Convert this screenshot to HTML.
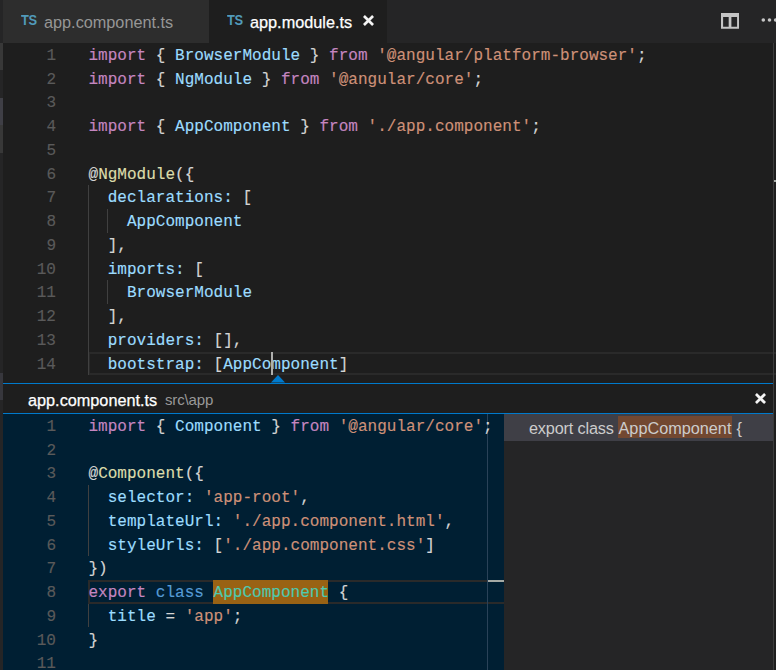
<!DOCTYPE html>
<html>
<head>
<meta charset="utf-8">
<title>app.module.ts</title>
<style>
html,body{margin:0;padding:0;}
body{width:776px;height:670px;overflow:hidden;background:#1e1e1e;position:relative;font-family:"Liberation Sans",sans-serif;}
.abs{position:absolute;}
#side{left:0;top:0;width:3px;height:670px;background:#252526;}
#side i{position:absolute;left:0;width:3px;display:block;}
#tabs{left:3px;top:0;width:773px;height:43px;background:#252526;}
.tab{position:absolute;top:0;height:43px;font-size:16.25px;line-height:44px;white-space:nowrap;}
.tab .ts{position:absolute;top:0;font-size:14px;font-weight:bold;color:#519aba;line-height:41px;letter-spacing:-0.5px;transform:scaleX(0.92);transform-origin:0 0;}
.tab .nm{position:absolute;top:0;}
#t1{left:0;width:206px;background:#2d2d2d;color:#969696;}
#t2{left:206px;width:178px;background:#1e1e1e;color:#fff;}
#t2 .nm{-webkit-text-stroke:0.25px;}
.code{font-family:"Liberation Mono",monospace;font-size:16px;letter-spacing:0.02px;white-space:pre;color:#d4d4d4;-webkit-text-stroke:0.15px;}
.ln{position:absolute;left:0;height:23.75px;line-height:23.75px;width:100%;}
.ln b{position:absolute;left:0;top:2px;width:53px;text-align:right;color:#5a5a5a;font-weight:normal;}
.ln span.c{position:absolute;left:85.5px;top:2px;}
.k{color:#c586c0;}.v{color:#9cdcfe;}.s{color:#ce9178;}.f{color:#dcdcaa;}.b{color:#569cd6;}.t{color:#4ec9b0;}
.g{position:absolute;width:1px;background:#404040;}
#ed{left:3px;top:43px;width:773px;height:333px;overflow:hidden;}
#peek{left:3px;top:383px;width:770px;height:287px;}
#ptitle{left:0;top:1px;width:770px;height:29px;background:#1e1e1e;font-size:16.25px;line-height:32px;white-space:nowrap;}
#pbody{left:0;top:31px;width:501px;height:256px;background:#001f33;overflow:hidden;}
#ptree{left:501px;top:31px;width:269px;height:256px;background:#252526;}
</style>
</head>
<body>
<div id="side" class="abs">
  <i style="top:43px;height:27px;background:#383838"></i>
  <i style="top:98px;height:27px;background:#3f3f46"></i>
  <i style="top:125px;height:28px;background:#383838"></i>
  <i style="top:373px;height:27px;background:#37373d"></i>
</div>

<div id="tabs" class="abs">
  <div class="tab" id="t1"><span class="ts" style="left:17.5px">TS</span><span class="nm" style="left:41px">app.component.ts</span></div>
  <div class="tab" id="t2"><span class="ts" style="left:17.5px">TS</span><span class="nm" style="left:41px">app.module.ts</span>
    <svg class="abs" style="left:154.1px;top:15.2px" width="11" height="11" viewBox="0 0 11 11"><path d="M0.95 0.95L10.05 10.05M10.05 0.95L0.95 10.05" stroke="#f4f4f4" stroke-width="2.7" fill="none"/></svg>
  </div>
  <svg class="abs" style="left:717.9px;top:13.1px" width="18.2" height="15.8" viewBox="0 0 18.2 15.8"><path d="M0 0H18.2V15.8H0Z M2.1 4V13.7H7.7V4Z M10.4 4V13.7H16.1V4Z" fill="#c5c5c5" fill-rule="evenodd"/></svg>
  <svg class="abs" style="left:757.1px;top:17.4px" width="16" height="6" viewBox="0 0 16 6"><circle cx="3.3" cy="3" r="1.8" fill="#c5c5c5"/><circle cx="9.5" cy="3" r="1.8" fill="#c5c5c5"/><circle cx="15.6" cy="3" r="1.8" fill="#c5c5c5"/></svg>
</div>

<div id="ed" class="abs code">
  <div class="abs" style="left:85px;top:309px;width:700px;height:19px;border:2px solid #2a2a2a;"></div>
  <i class="g" style="left:85px;top:142px;height:190px"></i>
  <i class="g" style="left:104px;top:166px;height:24px"></i>
  <i class="g" style="left:104px;top:237px;height:24px"></i>
  <div class="ln" style="top:-0.25px"><b>1</b><span class="c"><span class="k">import</span> { <span class="v">BrowserModule</span> } <span class="k">from</span> <span class="s">'@angular/platform-browser'</span>;</span></div>
  <div class="ln" style="top:23.5px"><b>2</b><span class="c"><span class="k">import</span> { <span class="v">NgModule</span> } <span class="k">from</span> <span class="s">'@angular/core'</span>;</span></div>
  <div class="ln" style="top:47.25px"><b>3</b></div>
  <div class="ln" style="top:71px"><b>4</b><span class="c"><span class="k">import</span> { <span class="v">AppComponent</span> } <span class="k">from</span> <span class="s">'./app.component'</span>;</span></div>
  <div class="ln" style="top:94.75px"><b>5</b></div>
  <div class="ln" style="top:118.5px"><b>6</b><span class="c">@<span class="f">NgModule</span>({</span></div>
  <div class="ln" style="top:142.25px"><b>7</b><span class="c">  <span class="v">declarations</span><span class="v">:</span> [</span></div>
  <div class="ln" style="top:166px"><b>8</b><span class="c">    <span class="v">AppComponent</span></span></div>
  <div class="ln" style="top:189.75px"><b>9</b><span class="c">  ],</span></div>
  <div class="ln" style="top:213.5px"><b>10</b><span class="c">  <span class="v">imports</span><span class="v">:</span> [</span></div>
  <div class="ln" style="top:237.25px"><b>11</b><span class="c">    <span class="v">BrowserModule</span></span></div>
  <div class="ln" style="top:261px"><b>12</b><span class="c">  ],</span></div>
  <div class="ln" style="top:284.75px"><b>13</b><span class="c">  <span class="v">providers</span><span class="v">:</span> [],</span></div>
  <div class="ln" style="top:308.5px"><b>14</b><span class="c">  <span class="v">bootstrap</span><span class="v">:</span> [<span class="v">AppComponent</span>]</span></div>
  <div class="abs" style="left:268px;top:309px;width:2px;height:23px;background:#aeafad"></div>
</div>
<div class="abs" style="left:773px;top:43px;width:1px;height:627px;background:#3c3c3c"></div>
<div class="abs" style="left:774px;top:180px;width:2px;height:2px;background:#a5aaa5"></div>

<svg class="abs" style="left:271px;top:375px" width="14" height="8" viewBox="0 0 14 8"><path d="M7 0L14 7.5H0Z" fill="#007acc"/></svg>
<div id="peek" class="abs">
  <div class="abs" style="left:0;top:0;width:770px;height:1px;background:#007acc"></div>
  <div id="ptitle" class="abs"><span class="abs" style="left:25px;color:#fff;-webkit-text-stroke:0.25px">app.component.ts</span><span class="abs" style="left:162px;color:#999;font-size:15px;letter-spacing:-0.15px">src\app</span>
    <svg class="abs" style="left:752.1px;top:9.2px" width="11" height="11" viewBox="0 0 11 11"><path d="M0.95 0.95L10.05 10.05M10.05 0.95L0.95 10.05" stroke="#f4f4f4" stroke-width="2.7" fill="none"/></svg>
  </div>
  <div class="abs" style="left:0;top:30px;width:770px;height:1px;background:#007acc"></div>
  <div id="pbody" class="abs code">
    <div class="abs" style="left:85px;top:166px;width:430px;height:20px;border:2px solid #2a2a2a;"></div>
    <div class="abs" style="left:210px;top:166px;width:115px;height:24px;background:#996214"></div>
    <i class="g" style="left:85px;top:71px;height:71px;"></i>
    <i class="g" style="left:85px;top:190px;height:23px;"></i>
    <div class="abs" style="left:484px;top:0;width:1px;height:256px;background:#2a4258"></div>
    <div class="abs" style="left:485px;top:166px;width:16px;height:2px;background:#a5aaa5"></div>
    <div class="ln" style="top:-0.25px"><b>1</b><span class="c"><span class="k">import</span> { <span class="v">Component</span> } <span class="k">from</span> <span class="s">'@angular/core'</span>;</span></div>
    <div class="ln" style="top:23.5px"><b>2</b></div>
    <div class="ln" style="top:47.25px"><b>3</b><span class="c">@<span class="f">Component</span>({</span></div>
    <div class="ln" style="top:71px"><b>4</b><span class="c">  <span class="v">selector</span><span class="v">:</span> <span class="s">'app-root'</span>,</span></div>
    <div class="ln" style="top:94.75px"><b>5</b><span class="c">  <span class="v">templateUrl</span><span class="v">:</span> <span class="s">'./app.component.html'</span>,</span></div>
    <div class="ln" style="top:118.5px"><b>6</b><span class="c">  <span class="v">styleUrls</span><span class="v">:</span> [<span class="s">'./app.component.css'</span>]</span></div>
    <div class="ln" style="top:142.25px"><b>7</b><span class="c">})</span></div>
    <div class="ln" style="top:166px"><b>8</b><span class="c"><span class="k">export</span> <span class="b">class</span> <span class="t">AppComponent</span> {</span></div>
    <div class="ln" style="top:189.75px"><b>9</b><span class="c">  <span class="v">title</span> = <span class="s">'app'</span>;</span></div>
    <div class="ln" style="top:213.5px"><b>10</b><span class="c">}</span></div>
    <div class="ln" style="top:237.25px"><b>11</b></div>
  </div>
  <div id="ptree" class="abs">
    <div class="abs" style="left:0;top:0;width:269px;height:27px;background:#3f3f46;font-size:16.25px;line-height:29px;color:#cccccc;white-space:nowrap;">
      <div class="abs" style="left:114px;top:2px;width:114px;height:22px;background:#724831"></div>
      <span class="abs" style="left:25px;letter-spacing:-0.17px">export class</span><span class="abs" style="left:114.5px">AppComponent</span><span class="abs" style="left:232.5px">{</span>
    </div>
  </div>
</div>
</body>
</html>
